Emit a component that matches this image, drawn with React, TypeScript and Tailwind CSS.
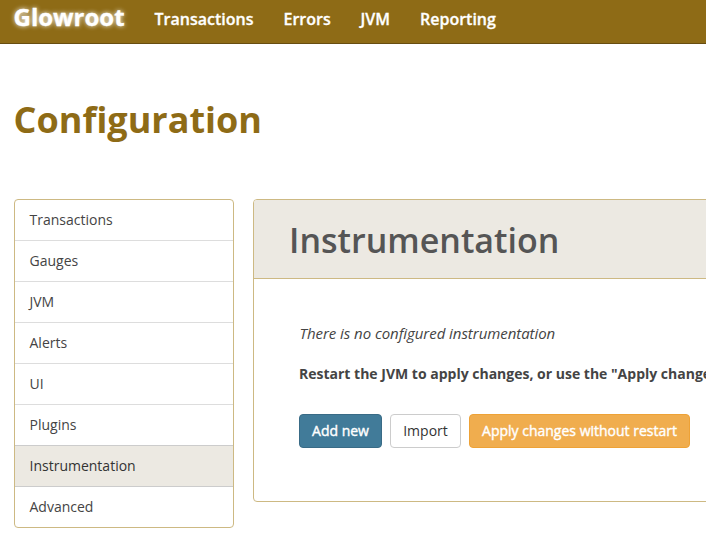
const items = ["Transactions", "Gauges", "JVM", "Alerts", "UI", "Plugins", "Instrumentation", "Advanced"];

export default function App() {
  return (
    <div className="h-[554px] w-[706px] overflow-hidden bg-white font-['Open_Sans',sans-serif] text-[14px] leading-5 text-[#444]">
      <nav className="flex h-11 items-start border-b border-[#674d10] bg-[#8e6b16] pl-[13.5px] text-[16px] font-semibold text-white [-webkit-text-stroke:0.3px_#fff]">
        <span className="mr-[30px] mt-[2px] w-[111px] whitespace-nowrap text-[24px] font-bold leading-[30px] [text-shadow:0_0_5px_#fff]">Glowroot</span>
        <span className="mt-[9px] w-[129px]">Transactions</span>
        <span className="mt-[9px] w-[77px]">Errors</span>
        <span className="mt-[9px] w-[59.5px]">JVM</span>
        <span className="mt-[9px]">Reporting</span>
      </nav>
      <h1 className="ml-[13.5px] mt-[50px] text-[36px] font-bold leading-[52px] text-[#8e6b16]">Configuration</h1>
      <div className="ml-[14px] mt-[53px] flex items-start gap-[19px]">
        <ul className="w-[220px] shrink-0 overflow-hidden rounded border border-[#cdb983]">
          {items.map((item) => (
            <li key={item} className={`h-[41px] border-b pl-[14.5px] pt-[10px] last:h-10 last:border-b-0 ${item === "Instrumentation" ? "border-[#ccc] bg-[#ece9e2] text-[#333]" : item === "Plugins" ? "border-[#ccc]" : "border-[#ddd]"}`}>{item}</li>
          ))}
        </ul>
        <section className="h-[303px] w-[600px] shrink-0 overflow-hidden rounded border border-[#cdb983]">
          <h2 className="h-[79px] border-b border-[#cdb983] bg-[#ece9e2] pl-[35px] pt-[15px] text-[34px] font-semibold leading-[50px] text-[#555]">Instrumentation</h2>
          <div className="pl-[45px] pt-[44px]">
            <p className="pl-[0.5px] text-[15px] italic leading-5 tracking-[-0.05px]">There is no configured instrumentation</p>
            <p className="mt-[21px] whitespace-nowrap font-bold">Restart the JVM to apply changes, or use the "Apply changes without restart" button</p>
            <div className="mt-[30px] flex gap-2">
              <button className="h-[34px] w-[83px] rounded border border-[#396b86] bg-[#417b99] text-white [-webkit-text-stroke:0.4px_#fff]">Add new</button>
              <button className="h-[34px] w-[71px] rounded border border-[#ccc] bg-white text-[#333]">Import</button>
              <button className="h-[34px] w-[221px] whitespace-nowrap rounded border border-[#eea236] bg-[#f0ad4e] text-white [-webkit-text-stroke:0.4px_#fff]">Apply changes without restart</button>
            </div>
          </div>
        </section>
      </div>
    </div>
  );
}
